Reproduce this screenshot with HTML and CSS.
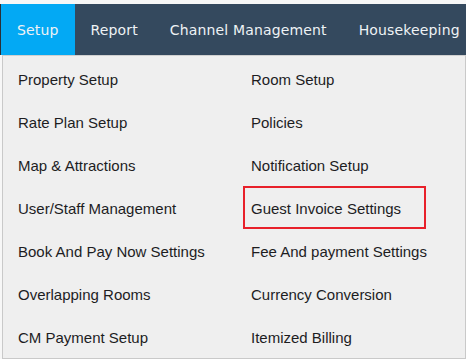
FILE: index.html
```html
<!DOCTYPE html>
<html>
<head>
<meta charset="utf-8">
<link rel="stylesheet" href="styles.css">
</head>
<body>
<div class="page">
  <nav class="navbar">
    <a class="nav-item active">Setup</a>
    <a class="nav-item">Report</a>
    <a class="nav-item">Channel Management</a>
    <a class="nav-item">Housekeeping</a>
  </nav>
  <div class="dropdown">
    <div class="menu-item">Property Setup</div>
    <div class="menu-item right"><span class="box">Room Setup</span></div>
    <div class="menu-item">Rate Plan Setup</div>
    <div class="menu-item right"><span class="box">Policies</span></div>
    <div class="menu-item">Map &amp; Attractions</div>
    <div class="menu-item right"><span class="box">Notification Setup</span></div>
    <div class="menu-item">User/Staff Management</div>
    <div class="menu-item right"><span class="box highlight">Guest Invoice Settings</span></div>
    <div class="menu-item">Book And Pay Now Settings</div>
    <div class="menu-item right"><span class="box">Fee And payment Settings</span></div>
    <div class="menu-item">Overlapping Rooms</div>
    <div class="menu-item right"><span class="box">Currency Conversion</span></div>
    <div class="menu-item">CM Payment Setup</div>
    <div class="menu-item right"><span class="box">Itemized Billing</span></div>
  </div>
</div>
</body>
</html>
```

FILE: styles.css
```css
html, body {
  margin: 0;
  padding: 0;
  background: #ffffff;
}

.page {
  width: 466px;
  padding-top: 4px;
  background: #f7f7f7;
}

.navbar {
  display: flex;
  height: 51px;
  background: #34495e;
  border-left: 1px solid #2a2f36;
}

.nav-item {
  display: flex;
  align-items: center;
  padding: 0 16px;
  color: #eef2f5;
  font-family: "DejaVu Sans", Verdana, sans-serif;
  font-size: 14px;
  letter-spacing: 0.15px;
  white-space: nowrap;
}

.nav-item.active {
  background: #03a9f4;
}

.dropdown {
  margin-left: 2px;
  display: grid;
  grid-template-columns: 240px 1fr;
  grid-auto-rows: 43px;
  padding-top: 1px;
  background: #efefef;
  border: 1px solid #c9c9c9;
  border-top: 1px solid #d0d0d0;
  font-family: "Liberation Sans", Arial, sans-serif;
  font-size: 15px;
  color: #1d1d1f;
}

.menu-item {
  display: flex;
  align-items: center;
  padding-left: 15px;
  padding-top: 2px;
  white-space: nowrap;
}

.menu-item.right {
  padding-left: 0;
  padding-top: 0;
  align-items: stretch;
}

.box {
  display: flex;
  align-items: center;
  width: 173px;
  padding-left: 6px;
  padding-top: 2px;
  border: 2px solid transparent;
  white-space: nowrap;
}

.box.highlight {
  border-color: #e8202a;
}
```
